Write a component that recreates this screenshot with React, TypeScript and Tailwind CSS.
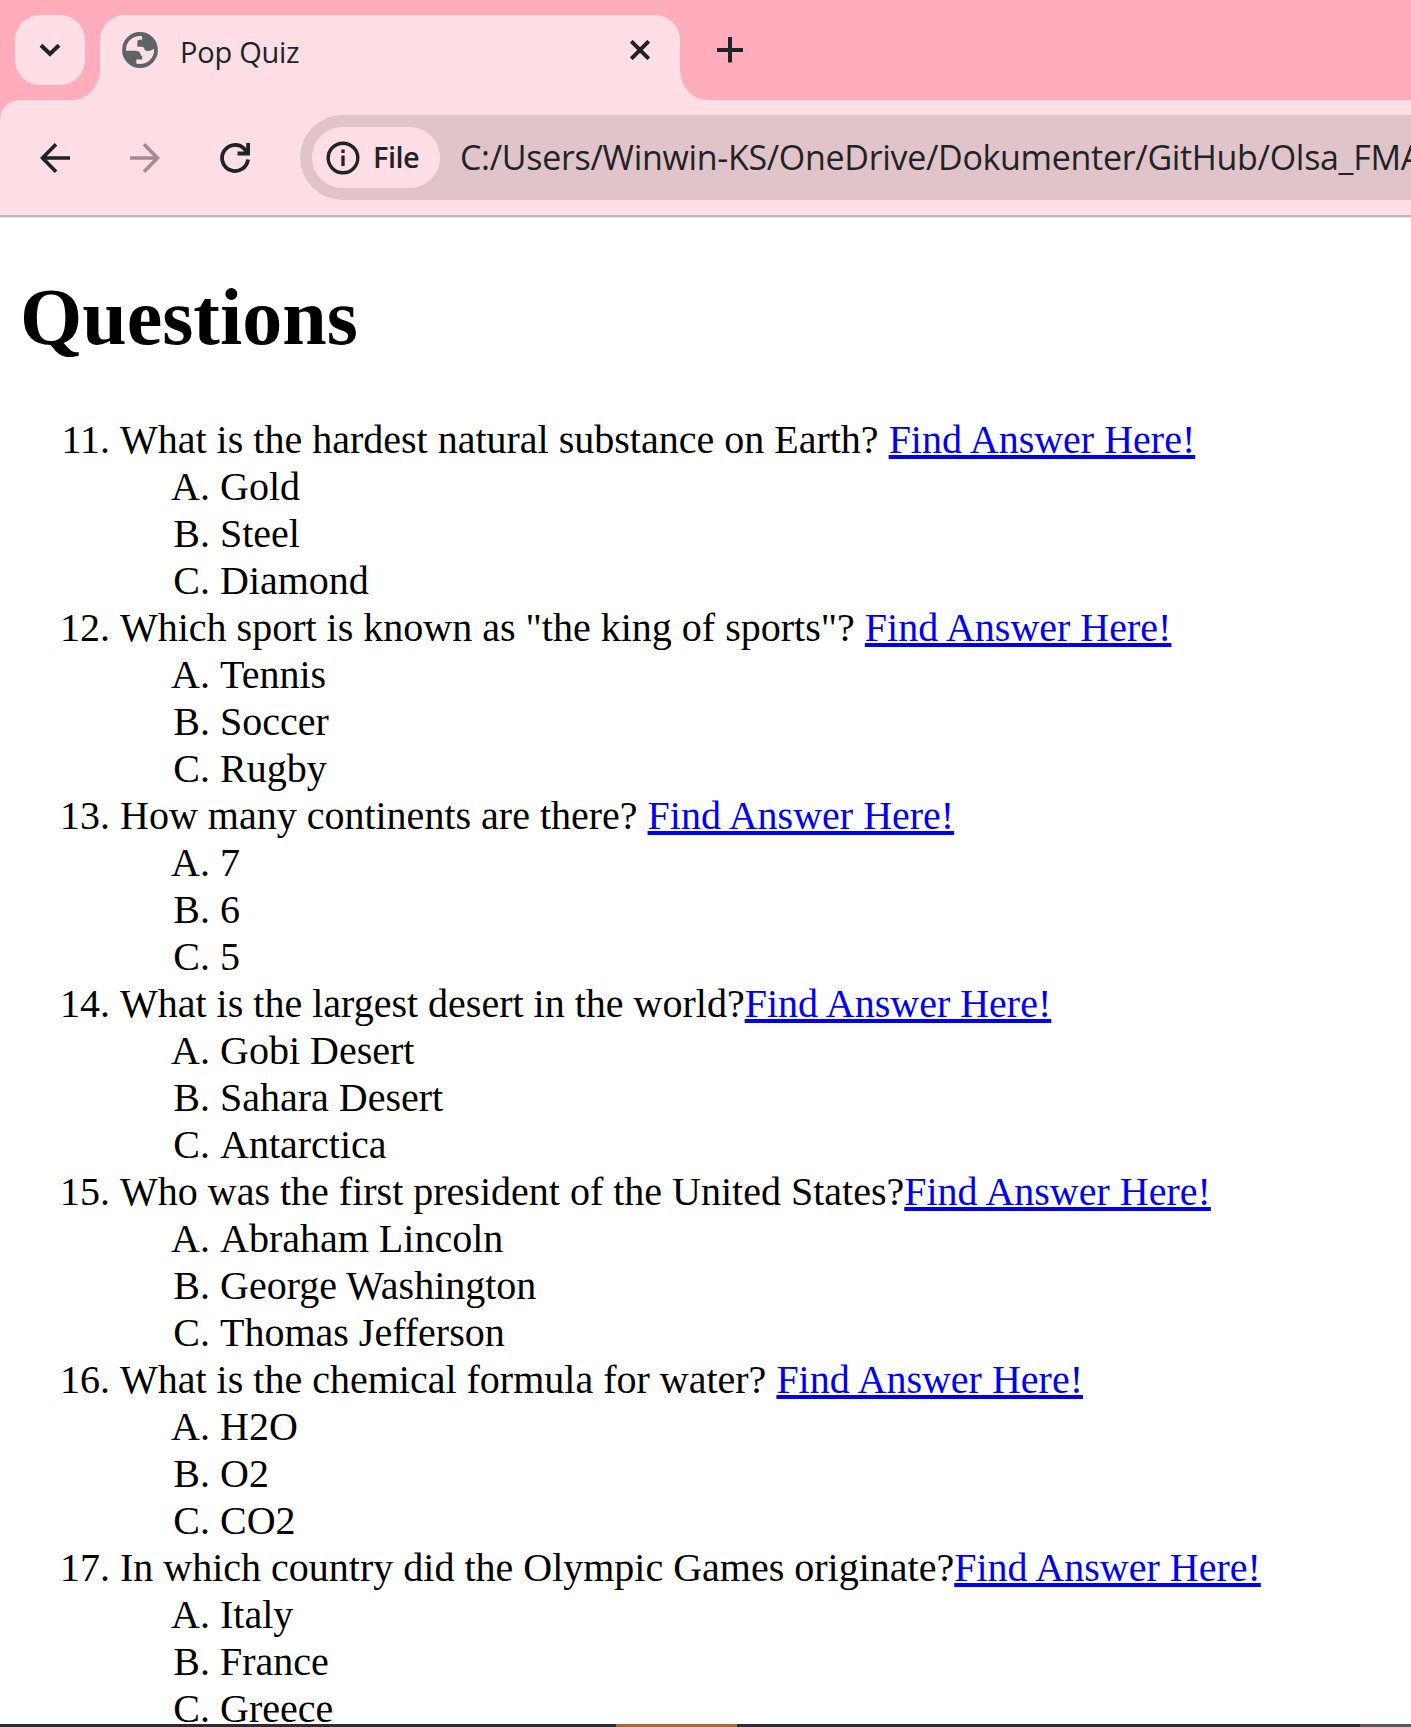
import React from "react";

type Question = { text: string; options: string[] };

const questions: Question[] = [
  { text: "What is the hardest natural substance on Earth? ", options: ["Gold", "Steel", "Diamond"] },
  { text: 'Which sport is known as "the king of sports"? ', options: ["Tennis", "Soccer", "Rugby"] },
  { text: "How many continents are there? ", options: ["7", "6", "5"] },
  { text: "What is the largest desert in the world?", options: ["Gobi Desert", "Sahara Desert", "Antarctica"] },
  {
    text: "Who was the first president of the United States?",
    options: ["Abraham Lincoln", "George Washington", "Thomas Jefferson"],
  },
  { text: "What is the chemical formula for water? ", options: ["H2O", "O2", "CO2"] },
  { text: "In which country did the Olympic Games originate?", options: ["Italy", "France", "Greece"] },
];

function TabStrip() {
  return (
    <div className="flex h-[100px] shrink-0 pl-[15px] pt-[15px]">
      <button className="flex size-[70px] items-center justify-center rounded-[25px] bg-[#ffdfe5]">
        <svg width="24" height="16" viewBox="0 0 24 16" fill="none" stroke="#1f2226" strokeWidth="4">
          <path d="M3 3.2 12 12 21 3.2" />
        </svg>
      </button>
      <div className="relative ml-[15px] flex h-[85px] w-[580px] items-start rounded-t-[25px] bg-[#ffdfe5]">
        <svg className="absolute bottom-0 -left-[27px]" width="27" height="30" viewBox="0 0 27 30" fill="#ffdfe5">
          <path d="M27 0V30H0C15 30 27 15 27 0Z" />
        </svg>
        <svg className="absolute bottom-0 -right-[27px]" width="27" height="30" viewBox="0 0 27 30" fill="#ffdfe5">
          <path d="M0 0V30H27C12 30 0 15 0 0Z" />
        </svg>
        <svg className="ml-[22px] mt-[17px] size-9" viewBox="0 0 36 36" fill="none">
          <circle cx="18" cy="18" r="16" stroke="#5f6368" strokeWidth="3.8" />
          <path
            fill="#5f6368"
            d="M20 2.5 20.2 7.8H17.6Q15.3 7.8 15.3 10.2V14.7H19.8Q22.6 15 22.6 18 23.4 19 26.5 19 30.5 18.5 33.5 15.5L31.5 8.5 26 4ZM2.5 18.8H14.4Q18.4 19.4 19 23.8H20.2V27.4H14.3V34L8 31.5 3 25Z"
          />
        </svg>
        <span className="ml-[22px] mt-[17px] whitespace-nowrap font-['Open_Sans'] text-[29px] leading-[40px] tracking-[-0.25px] text-[#1f2226]">
          Pop Quiz
        </span>
        <svg className="absolute left-[530px] top-[25px]" width="20" height="20" viewBox="0 0 20 20" stroke="#1f2226" strokeWidth="4">
          <path d="M1.3 1.3 18.7 18.7M18.7 1.3 1.3 18.7" />
        </svg>
      </div>
      <svg className="ml-[37px] mt-[22px]" width="26" height="26" viewBox="0 0 26 26" stroke="#1f2226" strokeWidth="4">
        <path d="M13 0V25.5M0 13H26" />
      </svg>
    </div>
  );
}

function Toolbar() {
  return (
    <div className="flex h-[118px] shrink-0 items-start overflow-hidden rounded-tl-[20px] border-b border-[#f3e0e4] bg-[#ffdfe5]">
      <div className="flex h-full w-full items-start border-b-2 border-[#d0b1b9] pl-10 pt-[15px]">
        <svg className="mt-[28px]" width="30" height="30" viewBox="0 0 30 30" fill="none" stroke="#1f2226" strokeWidth="3.7">
          <path d="M30 15H2.5M16 1.3 2.5 15 16 28.7" />
        </svg>
        <svg className="ml-[60px] mt-[28px]" width="30" height="30" viewBox="0 0 30 30" fill="none" stroke="#a18c92" strokeWidth="3.7">
          <path d="M0 15H27.5M14 1.3 27.5 15 14 28.7" />
        </svg>
        <svg className="ml-[60px] mt-[28px]" width="30" height="30" viewBox="0 0 30 30" fill="none" stroke="#1f2226" strokeWidth="3.8">
          <path d="M28 16.5A13 13 0 1 1 24.2 5.7L28 10" />
          <path d="M28.1 0V10.5H17.5" />
        </svg>
        <div className="ml-[50px] flex h-[85px] flex-1 items-start overflow-hidden rounded-l-[42.5px] bg-[#e0c4c9] pl-3 pt-3">
          <div className="flex h-[61px] w-[128px] shrink-0 items-center rounded-full bg-[#ffdfe5] pl-[14px]">
            <svg width="34" height="34" viewBox="0 0 34 34" fill="none" stroke="#1f2226">
              <circle cx="17" cy="17" r="14.8" strokeWidth="3.4" />
              <path d="M17 14.5V25M17 8.5V12" strokeWidth="3.3" />
            </svg>
            <span className="-mt-px ml-[13px] font-['Open_Sans'] text-[29px] font-semibold leading-[40px] tracking-[-0.5px] text-[#1f2226]">
              File
            </span>
          </div>
          <span className="ml-5 mt-[6px] w-0 flex-1 overflow-hidden whitespace-nowrap font-['Open_Sans'] text-[34px] leading-[48px] tracking-[-0.32px] text-[#1f2226]">
            C:/Users/Winwin-KS/OneDrive/Dokumenter/GitHub/Olsa_FMA
          </span>
        </div>
      </div>
    </div>
  );
}

export default function App() {
  return (
    <div className="flex h-[1727px] w-full flex-col overflow-hidden bg-[#ffadbc]">
      <TabStrip />
      <Toolbar />
      <main className="min-h-0 flex-1 bg-white px-5 font-['Liberation_Serif',serif] text-black">
        <h1 className="mt-[53px] text-[80px] font-bold leading-[92px]">Questions</h1>
        <ol start={11} className="mt-[53px] list-decimal pl-[100px] text-[40px] leading-[47px]">
          {questions.map((q) => (
            <li key={q.text} className="whitespace-pre">
              {q.text}
              <a
                href="#"
                className="text-[#0000ee] underline decoration-[4px] underline-offset-[2px] [text-decoration-skip-ink:none]"
              >
                Find Answer Here!
              </a>
              <ol className="list-[upper-alpha] pl-[100px]">
                {q.options.map((o) => (
                  <li key={o}>{o}</li>
                ))}
              </ol>
            </li>
          ))}
        </ol>
      </main>
      <div className="relative z-10 flex h-[3px] shrink-0 bg-[#272f32]">
        <div className="ml-[616px] w-[121px] bg-[#ad682f]" />
        <div className="ml-auto w-[51px] bg-[#505d5c]" />
      </div>
    </div>
  );
}
